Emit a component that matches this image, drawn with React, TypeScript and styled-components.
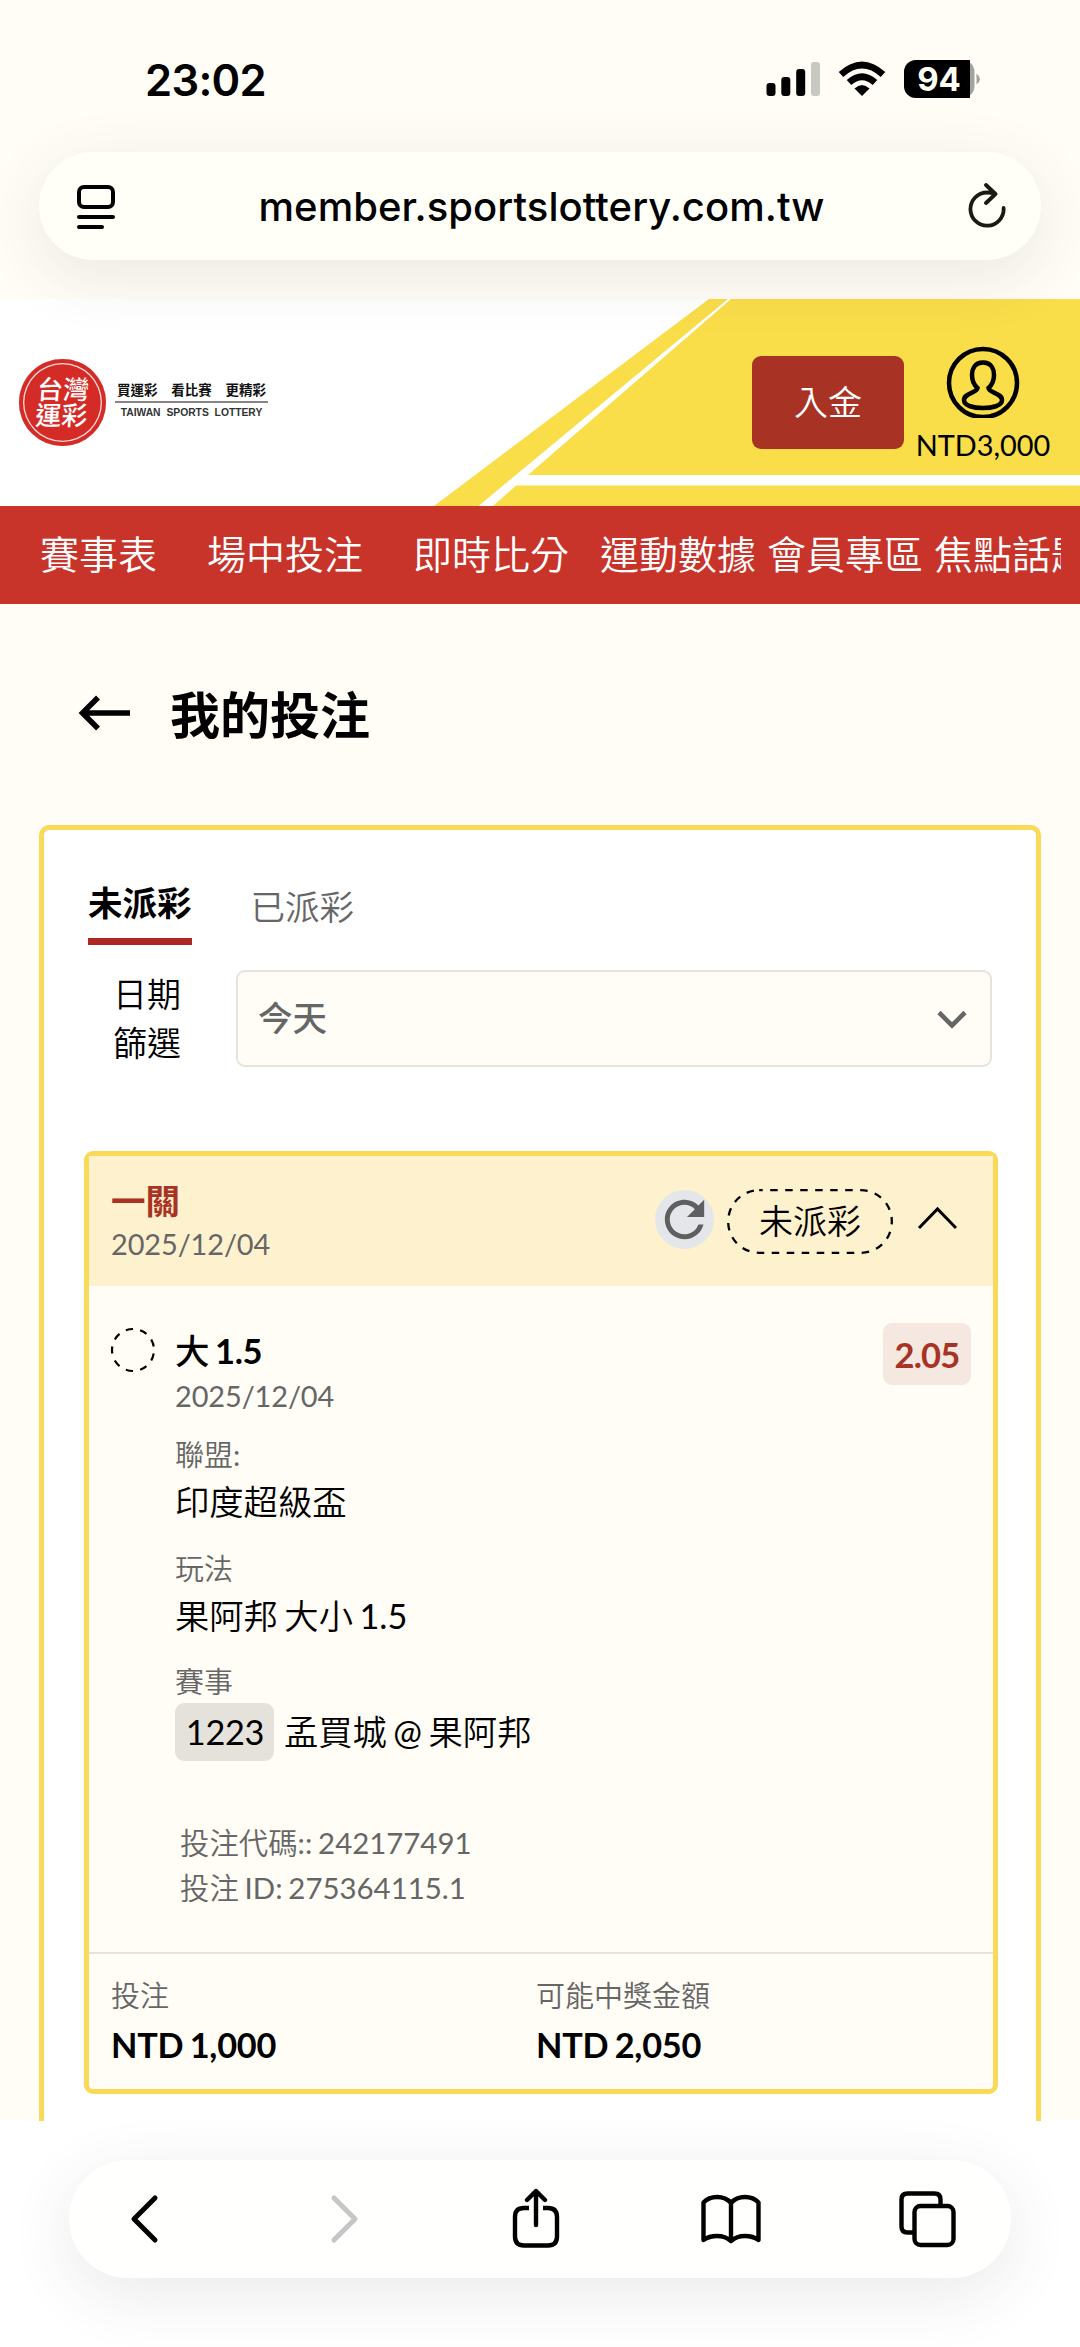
import React from "react";
import styled, { createGlobalStyle } from "styled-components";

const Global = createGlobalStyle`
  *{box-sizing:border-box}
  html,body{margin:0;padding:0}
  body{width:1080px;height:2347px;overflow:hidden;background:#fff;font-family:Lato,"Noto Sans CJK TC DemiLight","Noto Sans CJK TC",sans-serif;color:#000}
  svg{display:block}
`;

const Screen = styled.div`
  width: 1080px; height: 2347px; display: flex; flex-direction: column; overflow: hidden;
`;
const BrowserTop = styled.div`
  height: 299px; flex: none; background: #fffdf6; display: flex; flex-direction: column; position: relative; z-index: 2;
`;
const StatusBar = styled.div`
  height: 152px; padding: 54px 99px 0 145px; display: flex; justify-content: space-between; align-items: flex-start;
`;
const Clock = styled.div`
  font: 600 43.5px/53px Inter, sans-serif; letter-spacing: -0.7px;
`;
const StatusIcons = styled.div`
  display: flex; padding-top: 6px;
`;
const AddressBar = styled.div`
  height: 108px; margin: 0 39px; border-radius: 54px; background: #fffff8; display: flex; align-items: center;
  justify-content: space-between; padding: 0 34px 0 37px;
  box-shadow: 0 16px 64px rgba(60, 60, 50, 0.11);
`;
const Url = styled.div`
  font: 500 40px/50px Inter, sans-serif; letter-spacing: 0.05px; white-space: nowrap; margin-top: 2px;
`;
const SiteHeader = styled.header`
  height: 207px; flex: none; display: flex; justify-content: space-between; background: #fff; position: relative;
`;
const HeaderArt = styled.svg`
  position: absolute; inset: 0;
`;
const Brand = styled.div`
  display: flex; align-items: center; padding-left: 19px; gap: 9px; position: relative;
`;
const Seal = styled.div`
  width: 87px; height: 87px; border-radius: 50%; background: #d52b26; display: flex; align-items: center; justify-content: center;
  color: #fff; font: 500 26px/26px "Noto Sans CJK TC", sans-serif; box-shadow: inset 0 0 0 4px #d52b26, inset 0 0 0 5.3px #fbdcda;
`;
const SealText = styled.div`
  width: 53px; margin-top: -3px; transform: skewX(-4deg); text-align: center;
`;
const Slogan = styled.div`
  width: 153px; display: flex; flex-direction: column; align-items: center; margin-top: -6px;
`;
const SloganZh = styled.div`
  display: flex; width: 149px; justify-content: space-between; font: 700 13.5px/19px "Noto Sans CJK TC", sans-serif;
  color: #111;
`;
const SloganRule = styled.div`
  width: 153px; height: 1.5px; background: #8b8484; margin: 2px 0 3px;
`;
const SloganEn = styled.div`
  font: 700 10.3px/13px "Liberation Sans", Arial, sans-serif; white-space: nowrap; word-spacing: 3px; color: #333;
`;
const Account = styled.div`
  display: flex; padding: 0 30px 0 0; gap: 12px; position: relative;
`;
const Deposit = styled.button`
  width: 152px; height: 93px; margin-top: 57px; border: 0; border-radius: 9px; background: #a83224; color: #fff;
  font: 350 34px/50px "Noto Sans CJK TC", sans-serif; padding: 0 0 4px;
`;
const Wallet = styled.div`
  display: flex; flex-direction: column; align-items: center; padding-top: 47px; width: 134px;
`;
const Balance = styled.div`
  font-size: 28.9px; line-height: 36px; margin-top: 9px; white-space: nowrap;
`;
const Nav = styled.nav`
  height: 98px; flex: none; background: #c8332a; padding: 0 19px 0 40px;
`;
const NavList = styled.div`
  display: flex; overflow: hidden; height: 98px; align-items: center; color: #fff; padding-bottom: 6px;
`;
const NavItem = styled.span<{ $gap: number }>`
  flex: none; font: 350 39px/58px "Noto Sans CJK TC", sans-serif; margin-right: ${(p) => p.$gap}px;
`;
const Page = styled.main`
  height: 1517px; flex: none; overflow: hidden; background: #fffdf6; padding: 0 39px;
`;
const TitleRow = styled.div`
  height: 221px; display: flex; align-items: center; padding: 0 0 3px 39px; gap: 39px;
`;
const Title = styled.h1`
  margin: -3px 0 0; font: 700 50px/72px "Noto Sans CJK TC", sans-serif;
`;
const Panel = styled.section`
  height: 1400px; border: 5px solid #f9d957; border-radius: 10px; background: #fff; padding: 0 40px;
`;
const Tabs = styled.div`
  display: flex; gap: 59px; height: 115px; padding: 46px 0 0 4px;
`;
const Tab = styled.div<{ $active?: boolean }>`
  height: 69px; font-size: 34.5px; line-height: 50px; font-family: "Noto Sans CJK TC", sans-serif;
  font-weight: ${(p) => (p.$active ? 700 : 350)};
  color: ${(p) => (p.$active ? "#000" : "#666")};
  padding-top: ${(p) => (p.$active ? 0 : 4)}px;
  border-bottom: ${(p) => (p.$active ? "7px solid #ae2722" : "0")};
`;
const FilterRow = styled.div`
  display: flex; height: 97px; margin-top: 25px; padding-right: 4px;
`;
const FilterLabel = styled.div`
  width: 97px; text-align: right; font: 350 34px/49px "Noto Sans CJK TC", sans-serif; padding-left: 28px; margin-top: -2px;
`;
const Select = styled.div`
  width: 756px; height: 97px; margin-left: 55px; border: 2px solid #e6e3dd; border-radius: 9px; background: #fffdf6;
  display: flex; align-items: center; justify-content: space-between; padding: 0 23px 0 20px; flex: none;
`;
const SelectValue = styled.span`
  color: #666; font: 500 34.5px/50px "Noto Sans CJK TC", sans-serif; margin-top: -6px;
`;
const Ticket = styled.article`
  width: 914px; height: 943px; margin-top: 84px; border: 5px solid #f9d957; border-radius: 9px; background: #fffdf6;
`;
const TicketHead = styled.div`
  height: 130px; background: #fdf2cd; display: flex; justify-content: space-between; padding: 18px 36px 0 22px;
`;
const Kind = styled.div`
  font: 700 34.5px/50px "Noto Sans CJK TC", sans-serif; color: #a83224;
`;
const DateText = styled.div`
  font-size: 28.9px; letter-spacing: -0.1px; line-height: 36px; color: #666; white-space: nowrap; margin-top: 2px;
`;
const HeadActions = styled.div`
  display: flex; padding-top: 15px;
`;
const Refresh = styled.div`
  width: 59px; height: 59px; border-radius: 50%; background: #e5e6e9; margin: 1px 13px 0 0;
`;
const Pill = styled.div`
  width: 166px; height: 65px; position: relative; text-align: center; font: 350 34px/61px "Noto Sans CJK TC", sans-serif;
`;
const PillOutline = styled.svg`
  position: absolute; left: 0; top: 0;
`;
const Caret = styled.svg`
  margin: 16px 0 0 24px;
`;
const TicketBody = styled.div`
  height: 668px; display: flex; padding: 0 22px 0 21px; border-bottom: 2px solid #e6e3dd;
`;
const Pending = styled.svg`
  margin-top: 41px; flex: none;
`;
const Details = styled.div`
  flex: 1; padding: 38px 0 0 19px; display: flex; flex-direction: column; align-items: flex-start;
`;
const Pick = styled.div`
  font-size: 34.5px; line-height: 50px; font-weight: 700; white-space: nowrap; word-spacing: -2px; letter-spacing: -0.4px;
`;
const PickZh = styled.span`
  font-family: "Noto Sans CJK TC", sans-serif; font-weight: 500;
`;
const Label = styled.div`
  font-size: 29px; line-height: 44px; color: #666; white-space: nowrap;
`;
const Value = styled.div`
  font-size: 34.3px; line-height: 50px; white-space: nowrap; word-spacing: -2.3px;
`;
const Groups = styled.div`
  display: flex; flex-direction: column; padding-top: 19px; gap: 19.5px;
`;
const Match = styled.div`
  display: flex; align-items: center; gap: 10px; margin-top: -1px; font-size: 34.3px; line-height: 50px; white-space: nowrap;
  word-spacing: -2.3px;
`;
const Code = styled.span`
  width: 99px; height: 58px; border-radius: 9px; background: #e5e2dc; display: flex; align-items: center; justify-content: center;
  padding-left: 1px; letter-spacing: -0.3px;
`;
const Refs = styled.div`
  padding: 60px 0 0 5px; font-size: 29.4px; line-height: 44.5px; color: #666; white-space: nowrap; word-spacing: -1.7px;
`;
const Odds = styled.div`
  width: 88px; height: 62px; margin-top: 37px; border-radius: 9px; background: #f4e8e0; color: #a83224; font-size: 34.5px; font-weight: 700;
  display: flex; align-items: center; justify-content: center; flex: none; letter-spacing: -0.8px;
`;
const Totals = styled.div`
  display: flex; padding: 20px 0 0 22px;
`;
const Total = styled.div`
  width: 425px; white-space: nowrap;
`;
const Amount = styled.div`
  font-size: 34.3px; line-height: 50px; font-weight: 700; margin-top: 2px; word-spacing: -1.7px; letter-spacing: -0.25px;
`;
const BrowserBottom = styled.div`
  flex: 1; padding: 39px 69px 0; position: relative; z-index: 2; background: #fff;
`;
const Toolbar = styled.div`
  height: 118px; border-radius: 59px; background: #fffffe; display: flex; align-items: center;
  gap: 79.75px; padding-left: 17px; box-shadow: 0 16px 64px rgba(60, 60, 60, 0.11);
`;
const Tool = styled.div<{ $left?: number; $bottom?: number }>`
  width: 116px; flex: none; display: flex; justify-content: center;
  padding-left: ${(p) => p.$left ?? 0}px; padding-bottom: ${(p) => p.$bottom ?? 0}px;
`;

const NAV = [
  ["賽事表", 50], ["場中投注", 50], ["即時比分", 31], ["運動數據", 11], ["會員專區", 11], ["焦點話題", 0],
] as const;

export default function App() {
  return (
    <Screen>
      <Global />
      <BrowserTop>
        <StatusBar>
          <Clock>23:02</Clock>
          <StatusIcons>
            <svg width="215" height="40" viewBox="766 60 215 40">
              <rect x="766.5" y="83" width="9" height="13" rx="3" />
              <rect x="781.3" y="77" width="9" height="19" rx="3" />
              <rect x="796.2" y="69" width="9" height="27" rx="3" />
              <rect x="811" y="62" width="9" height="34" rx="3" fill="#c8c8c3" />
              <path d="M862 96 L854.500 88.500 Q862 81.500 869.500 88.500Z" />
              <path d="M849 82.500Q862 71 875 82.500" fill="none" stroke="#000" strokeWidth="6.800" />
              <path d="M841 74.500Q862 55.500 883 74.500" fill="none" stroke="#000" strokeWidth="6.800" />
              <rect x="904" y="60" width="70.500" height="38" rx="12" fill="#a3a39e" />
              <path d="M916 60H970V98H916A12 12 0 0 1 904 86V72A12 12 0 0 1 916 60Z" />
              <path d="M976.500 73.500Q983.500 79 976.500 84.500Z" fill="#a3a39e" />
              <text x="939" y="91" textAnchor="middle" fill="#fffff6" fontFamily="Inter" fontWeight="700" fontSize="33">94</text>
            </svg>
          </StatusIcons>
        </StatusBar>
        <AddressBar>
          <svg width="40" height="46" viewBox="0 0 40 46" fill="none" stroke="#000" strokeWidth="4" strokeLinecap="round">
            <rect x="3" y="4" width="34" height="20" rx="5" /><path d="M3 34H37M3 44H26" />
          </svg>
          <Url>member.sportslottery.com.tw</Url>
          <svg width="40" height="46" viewBox="0 0 40 46" fill="none" stroke="#1a1a14" strokeWidth="3.800" strokeLinecap="round" strokeLinejoin="round">
            <path d="M36.600 25A16.600 16.600 0 1 1 20 9.500Q24 9.500 28 10.800M19 2L28.500 11L19 20" />
          </svg>
        </AddressBar>
      </BrowserTop>
      <SiteHeader>
        <HeaderArt width="1080" height="207" viewBox="0 299 1080 207">
          <path d="M709 299H1080V506H434Z" fill="#f9dd49" />
          <path d="M728 299H731L528 475H1080V485.500H516L493 506H478.500Z" fill="#fff" />
        </HeaderArt>
        <Brand>
          <Seal><SealText>台灣運彩</SealText></Seal>
          <Slogan>
            <SloganZh><span>買運彩</span><span>看比賽</span><span>更精彩</span></SloganZh>
            <SloganRule />
            <SloganEn>TAIWAN SPORTS LOTTERY</SloganEn>
          </Slogan>
        </Brand>
        <Account>
          <Deposit>入金</Deposit>
          <Wallet>
            <svg width="74" height="72" viewBox="0 0 74 72" fill="none" stroke="#000" strokeWidth="4.500">
              <circle cx="37" cy="37" r="34" />
              <path d="M37 16.500C28 16.500 26 24 26 29C26 35 28 39 31.500 42C31 47 18 47 18 54C18 60 28 62 37 62C46 62 56 60 56 54C56 47 43 47 42.500 42C46 39 48 35 48 29C48 24 46 16.500 37 16.500Z" />
            </svg>
            <Balance>NTD3,000</Balance>
          </Wallet>
        </Account>
      </SiteHeader>
      <Nav>
        <NavList>
          {NAV.map(([t, g]) => <NavItem key={t} $gap={g}>{t}</NavItem>)}
        </NavList>
      </Nav>
      <Page>
        <TitleRow>
          <svg width="53" height="36" viewBox="0 0 53 36" fill="none" stroke="#000" strokeWidth="5.500">
            <path d="M52 18H5M20 2.500L4.500 18L20 33.500" />
          </svg>
          <Title>我的投注</Title>
        </TitleRow>
        <Panel>
          <Tabs>
            <Tab $active>未派彩</Tab>
            <Tab>已派彩</Tab>
          </Tabs>
          <FilterRow>
            <FilterLabel>日期篩選</FilterLabel>
            <Select>
              <SelectValue>今天</SelectValue>
              <svg width="30" height="22" viewBox="0 -2 30 22" fill="none" stroke="#666" strokeWidth="4.600"><path d="M2 2.500L15 15.500L28 2.500" /></svg>
            </Select>
          </FilterRow>
          <Ticket>
            <TicketHead>
              <div>
                <Kind>一關</Kind>
                <DateText>2025/12/04</DateText>
              </div>
              <HeadActions>
                <Refresh>
                  <svg width="59" height="59" viewBox="0 0 24 24" fill="#5e5f61"><path d="M17.650 6.350C16.200 4.900 14.210 4 12 4c-4.420 0-7.990 3.580-7.990 8s3.570 8 7.990 8c3.730 0 6.840-2.550 7.730-6h-2.080c-.82 2.330-3.040 4-5.650 4-3.310 0-6-2.690-6-6s2.690-6 6-6c1.660 0 3.140.69 4.220 1.780L13 11h7V4l-2.350 2.350z" /></svg>
                </Refresh>
                <Pill>
                  <PillOutline width="166" height="65" fill="none" stroke="#000" strokeWidth="2.300"><rect x="1.200" y="1.200" width="163.600" height="62.600" rx="31" strokeDasharray="7.500 7.500" strokeDashoffset="4" /></PillOutline>
                  未派彩
                </Pill>
                <Caret width="40" height="26" viewBox="0 0 40 26" fill="none" stroke="#000" strokeWidth="3"><path d="M2 23L20.500 4L39 23" /></Caret>
              </HeadActions>
            </TicketHead>
            <TicketBody>
              <Pending width="46" height="46" fill="none" stroke="#000" strokeWidth="2.200">
                <circle cx="23" cy="23" r="21" pathLength="18" strokeDasharray="1 1" strokeDashoffset="0.500" transform="rotate(180 23 23)" />
              </Pending>
              <Details>
                <Pick><PickZh>大</PickZh> 1.5</Pick>
                <DateText>2025/12/04</DateText>
                <Groups>
                  <div><Label>聯盟:</Label><Value>印度超級盃</Value></div>
                  <div><Label>玩法</Label><Value>果阿邦 大小 1.5</Value></div>
                  <div>
                    <Label>賽事</Label>
                    <Match><Code>1223</Code>孟買城 @ 果阿邦</Match>
                  </div>
                </Groups>
                <Refs><div>投注代碼:: 242177491</div><div>投注 ID: 275364115.1</div></Refs>
              </Details>
              <Odds>2.05</Odds>
            </TicketBody>
            <Totals>
              <Total><Label>投注</Label><Amount>NTD 1,000</Amount></Total>
              <Total><Label>可能中獎金額</Label><Amount>NTD 2,050</Amount></Total>
            </Totals>
          </Ticket>
        </Panel>
      </Page>
      <BrowserBottom>
        <Toolbar>
          <Tool><svg width="30" height="50" viewBox="0 0 30 50" fill="none" stroke="#000" strokeWidth="5" strokeLinecap="round" strokeLinejoin="round"><path d="M26 4L5 25L26 46" /></svg></Tool>
          <Tool $left={11}><svg width="30" height="50" viewBox="0 0 30 50" fill="none" stroke="#c6c6c6" strokeWidth="5" strokeLinecap="round" strokeLinejoin="round"><path d="M4 4L25 25L4 46" /></svg></Tool>
          <Tool $bottom={2}><svg width="48" height="61" viewBox="0 0 48 61" fill="none" stroke="#000" strokeWidth="4.400"><path d="M17 20H12Q3 20 3 29V48.500Q3 57.500 12 57.500H36Q45 57.500 45 48.500V29Q45 20 36 20H31" /><path d="M24 37V4M15 12L24 3L33 12" strokeLinecap="round" strokeLinejoin="round" /></svg></Tool>
          <Tool><svg width="60" height="52" viewBox="0 0 60 52" fill="none" stroke="#000" strokeWidth="4.400" strokeLinejoin="round"><path d="M30 10Q25 4 16 4Q7.500 4 2.500 9.500V47Q8 43 16 43Q24.500 43 30 48Q35.500 43 44 43Q52 43 57.500 47V9.500Q52.500 4 44 4Q35 4 30 10V48" /></svg></Tool>
          <Tool><svg width="58" height="58" viewBox="0 0 58 58" fill="none" stroke="#000" strokeWidth="4.400"><rect x="16.500" y="16" width="39" height="39" rx="6" /><path d="M42.500 15V9.500Q42.500 3.500 36.500 3.500H9.500Q3.500 3.500 3.500 9.500V36.500Q3.500 42.500 9.500 42.500H15" /></svg></Tool>
        </Toolbar>
      </BrowserBottom>
    </Screen>
  );
}
